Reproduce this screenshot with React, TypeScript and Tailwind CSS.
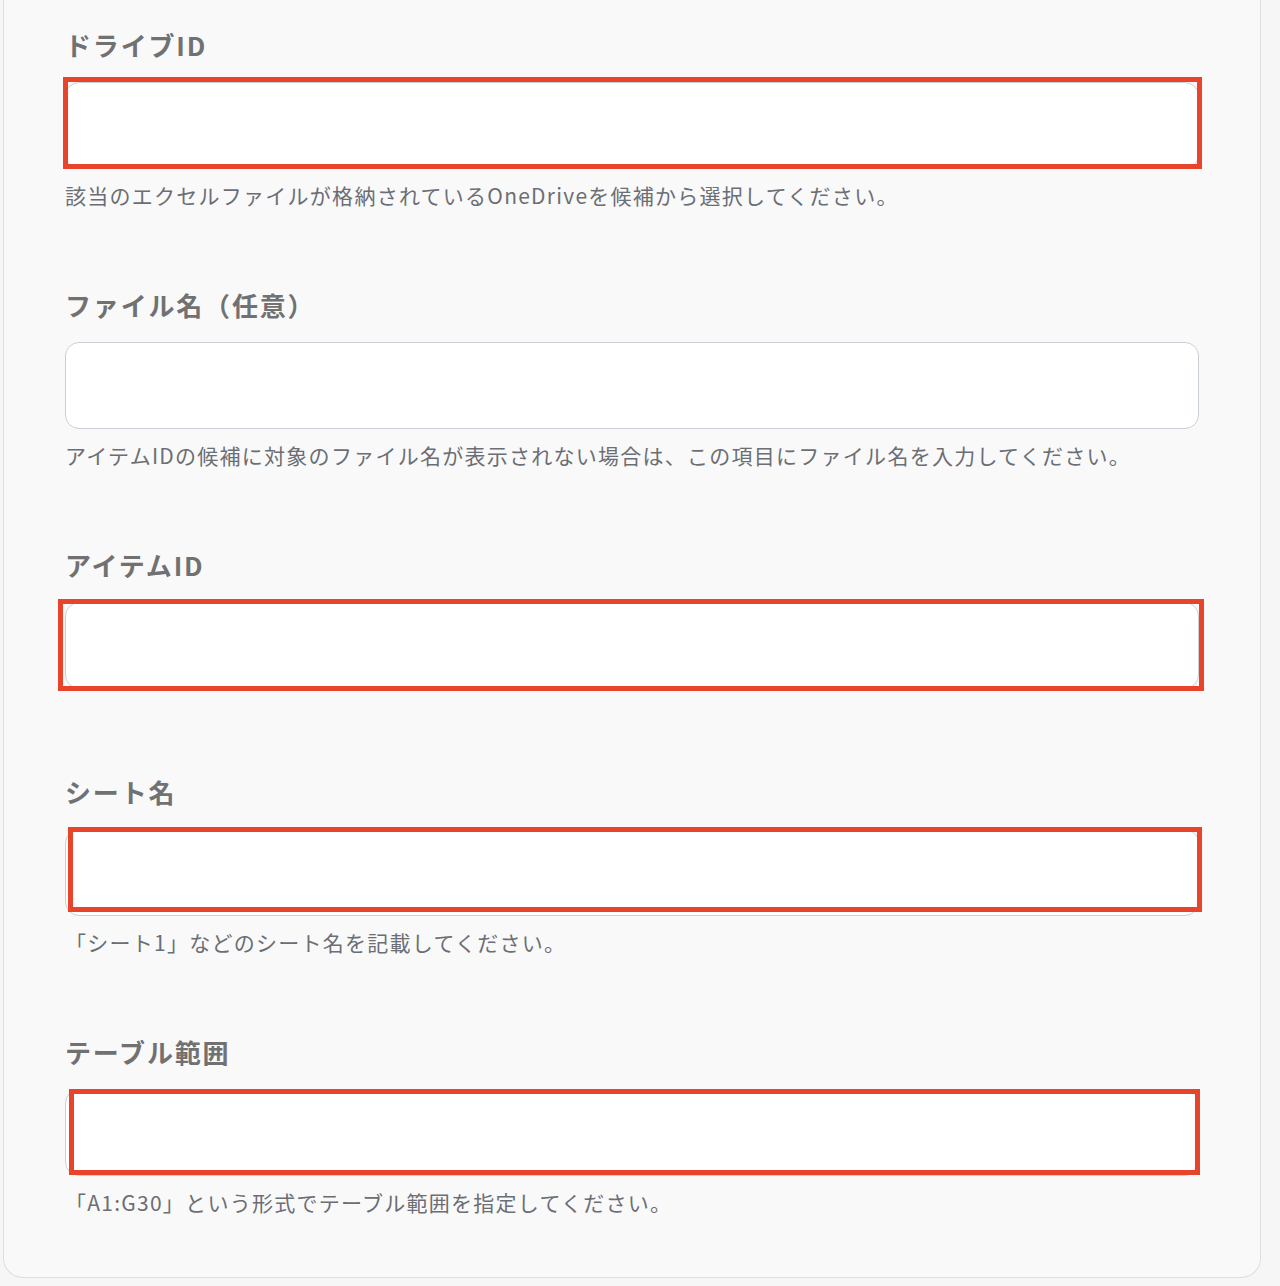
import React from 'react';

type Mark = { className: string };

interface Field {
    label: string;
    help?: string;
    mark?: Mark;
    gapAfter: string;
}

const fields: Field[] = [
    {
        label: 'ドライブID',
        help: '該当のエクセルファイルが格納されているOneDriveを候補から選択してください。',
        mark: { className: '-left-[2px] -right-[2px] -top-[5px] bottom-0' },
        gapAfter: 'mb-[78px]',
    },
    {
        label: 'ファイル名（任意）',
        help: 'アイテムIDの候補に対象のファイル名が表示されない場合は、この項目にファイル名を入力してください。',
        gapAfter: 'mb-[78px]',
    },
    {
        label: 'アイテムID',
        mark: { className: '-left-[7px] -right-[4px] -top-[3px] -bottom-[2px]' },
        gapAfter: 'mb-[85px]',
    },
    {
        label: 'シート名',
        help: '「シート1」などのシート名を記載してください。',
        mark: { className: 'left-[3px] -right-[2px] -top-[2px] bottom-[4px]' },
        gapAfter: 'mb-[78px]',
    },
    {
        label: 'テーブル範囲',
        help: '「A1:G30」という形式でテーブル範囲を指定してください。',
        mark: { className: 'left-[4px] right-0 top-0 bottom-[1px]' },
        gapAfter: 'mb-0',
    },
];

export default function App() {
    return (
        <div
            className="min-h-[1286px] w-[1280px] bg-[#f6f6f7]"
            style={{ fontFamily: '"Noto Sans CJK JP", "Noto Sans", sans-serif' }}
        >
            <div className="ml-[3px] w-[1258px] rounded-b-[20px] border-x border-b border-[#dcdfe3] bg-[#f9f9f9] pb-[61px] pl-[61px] pr-[60px] pt-[27px]">
                {fields.map((field) => (
                    <div key={field.label} className={field.gapAfter}>
                        {/* Label */}
                        <div className="text-[26px] font-bold leading-[36px] tracking-[0.07em] text-[#717171]">
                            {field.label}
                        </div>

                        {/* Input with annotation box */}
                        <div className="relative mt-[19px]">
                            <div className="h-[87px] w-[1134px] rounded-[14px] border-[1.5px] border-[#cbd0d6] bg-white"></div>
                            {field.mark && (
                                <div className={`absolute border-[5px] border-[#e8432b] ${field.mark.className}`}></div>
                            )}
                        </div>

                        {/* Help text */}
                        {field.help && (
                            <div className="mt-[12px] text-[21px] leading-[28px] tracking-[0.06em] text-[#6b6e74]">
                                {field.help}
                            </div>
                        )}
                    </div>
                ))}
            </div>
        </div>
    );
}
